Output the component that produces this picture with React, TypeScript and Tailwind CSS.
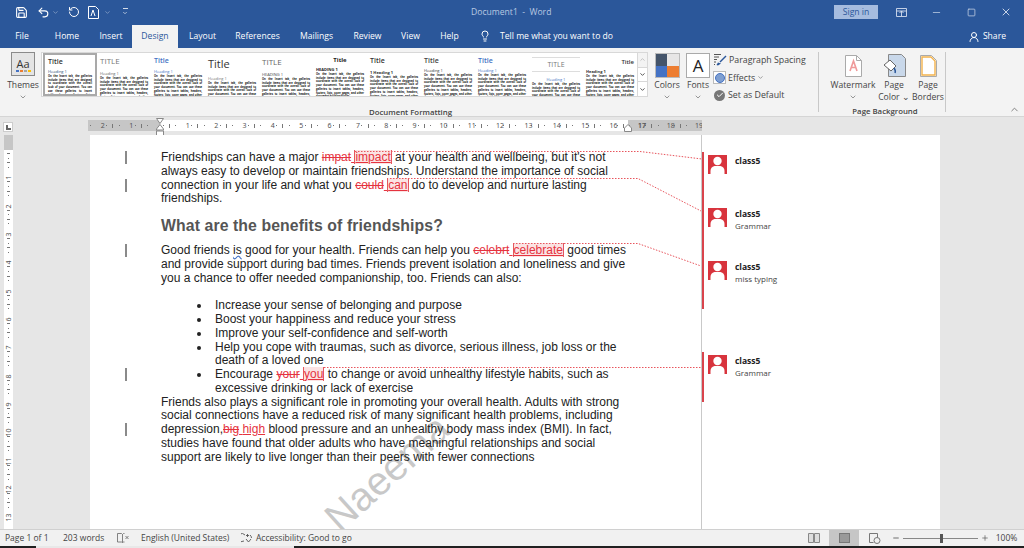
import { ChevronDown, ChevronUp, Lightbulb, Minus, Plus, RotateCw, Save, Square, Undo2, UserRound, X, Check } from "lucide-react";
import type { ReactNode } from "react";

const UI = "font-['Open_Sans',sans-serif]";
const BODY =
  "On the Insert tab, the galleries include items that are designed to coordinate with the overall look of your document. You can use these galleries to insert tables, headers, footers, lists, cover pages, and other document building blocks.";

const TABS = [
  { label: "File", w: "w-[44px]" },
  { label: "Home", w: "w-[46px]" },
  { label: "Insert", w: "w-[42px]" },
  { label: "Design", w: "w-[46px]", active: true },
  { label: "Layout", w: "w-[49px]" },
  { label: "References", w: "w-[61px]" },
  { label: "Mailings", w: "w-[57px]" },
  { label: "Review", w: "w-[45px]" },
  { label: "View", w: "w-[41px]" },
  { label: "Help", w: "w-[37px]" },
];

const STYLES = [
  { title: "Title", t: "text-[7px] font-semibold text-[#333]", head: "Heading 1", h: "text-[#1f4e79]", pt: "pt-[3px]", gap: "mt-[5px]", selected: true },
  { title: "TITLE", t: "text-[8px] text-[#777]", head: "Heading 1", h: "text-[#666]", pt: "pt-[4px]", gap: "mt-[7px]" },
  { title: "Title", t: "text-[7px] font-semibold text-[#4472c4]", head: "Heading 1", h: "text-[#4472c4]", pt: "pt-[4px]", gap: "mt-[6px]" },
  { title: "Title", t: "text-[11px] text-[#333]", head: "Heading 1", h: "text-[#777]", pt: "pt-[5px]", gap: "mt-[8px]" },
  { title: "TITLE", t: "text-[8px] text-[#666]", head: "HEADING 1", h: "text-[#444]", pt: "pt-[5px]", gap: "mt-[7px]" },
  { title: "Title", t: "text-[6px] font-bold text-[#222] text-center", head: "HEADING 1", h: "font-bold text-[#222]", pt: "pt-[4px]", gap: "mt-[5px]" },
  { title: "Title", t: "text-[7px] font-semibold text-[#333]", head: "1  Heading 1", h: "font-bold text-[#333]", pt: "pt-[4px]", gap: "mt-[7px]" },
  { title: "Title", t: "text-[7px] font-semibold text-[#444]", head: "Heading 1", h: "text-[#333]", pt: "pt-[4px]", gap: "mt-[5px]" },
  { title: "Title", t: "text-[7px] font-semibold text-[#4472c4]", head: "Heading 1", h: "text-[#4472c4]", pt: "pt-[4px]", gap: "mt-[5px]" },
  { title: "TITLE", t: "text-[7px] text-[#777] text-center border-y border-[#ddd] py-[3px]", head: "Heading 1", h: "text-[#4472c4] text-center", pt: "pt-[4px]", gap: "mt-[6px]" },
  { title: "Title", t: "text-[6px] font-semibold text-[#333] text-right", head: "Heading 1", h: "font-bold text-[#333]", pt: "pt-[6px]", gap: "mt-[5px]" },
];

function GalleryItem({ s }: { s: (typeof STYLES)[number] }) {
  return (
    <div className={`w-[54px] shrink-0 h-full px-[3px] overflow-hidden ${s.pt} ${s.selected ? "border-2 border-[#a9a9a9]" : ""}`}>
      <div className={`leading-none ${s.t}`}>{s.title}</div>
      <div className={`text-[4px] leading-none ${s.gap} ${s.h}`}>{s.head}</div>
      <div className="text-[2.600px] font-bold leading-[3.700px] mt-[1px] text-[#111] text-justify">{BODY}</div>
    </div>
  );
}

function BigButton({ label, label2, caret, icon, w }: { label: string; label2?: string; caret?: boolean; icon: ReactNode; w: string }) {
  return (
    <div className={`flex flex-col items-center ${w} shrink-0`}>
      <div className="h-[27px] flex items-center justify-center">{icon}</div>
      <div className="text-[8.600px] leading-[12px] text-[#444] whitespace-nowrap">{label}</div>
      {label2 && <div className="text-[8.600px] leading-[12px] text-[#444] whitespace-nowrap">{label2}</div>}
      {caret && <ChevronDown size={8} className="text-[#666] mt-[2px]" />}
    </div>
  );
}

function Ribbon() {
  return (
    <div className={`h-[69px] bg-[#f3f3f3] border-b border-[#d5d5d5] flex shrink-0 relative ${UI}`}>
      <div className="w-[41px] shrink-0 flex flex-col items-center pt-[4px] pl-[5px]">
        <div className="w-[24px] h-[24px] border border-[#8a8a8a] bg-[#e4e4e4] flex flex-col items-center justify-center relative">
          <span className="text-[11px] leading-[13px] text-[#333]">Aa</span>
          <div className="flex gap-[1px]">
            <span className="w-[3px] h-[2px] bg-[#4472c4]" />
            <span className="w-[3px] h-[2px] bg-[#ed7d31]" />
            <span className="w-[3px] h-[2px] bg-[#a5a5a5]" />
            <span className="w-[3px] h-[2px] bg-[#ffc000]" />
          </div>
        </div>
        <div className="text-[8.600px] leading-[12px] mt-[3px] text-[#444]">Themes</div>
        <ChevronDown size={8} className="text-[#666] mt-[2px]" />
      </div>

      <div className="w-[607px] shrink-0 flex flex-col">
        <div className="mt-[4px] h-[45px] border border-[#d8d8d8] bg-white flex pl-[1px]">
          {STYLES.map((s, i) => (
            <GalleryItem key={i} s={s} />
          ))}
          <div className="w-[10px] shrink-0 ml-auto flex flex-col border-l border-[#d8d8d8] bg-[#f3f3f3]">
            <div className="flex-1 flex items-center justify-center text-[#bbb]">
              <ChevronUp size={7} strokeWidth={3} />
            </div>
            <div className="flex-1 flex items-center justify-center border-y border-[#d8d8d8] bg-white text-[#444]">
              <ChevronDown size={7} strokeWidth={3} />
            </div>
            <div className="flex-1 flex items-center justify-center bg-white text-[#444]">
              <ChevronDown size={7} strokeWidth={3} />
            </div>
          </div>
        </div>
        <div className="text-[7.800px] font-semibold text-[#444] text-center mt-[9px] pl-[132px] leading-[12px]">Document Formatting</div>
      </div>

      <div className="flex pt-[4px] pl-[4px]">
        <BigButton
          w="w-[30px]"
          label="Colors"
          caret
          icon={
            <div className="w-[25px] h-[25px] grid grid-cols-2 grid-rows-2 border border-[#bbb]">
              <span className="bg-[#44546a]" />
              <span className="bg-[#e7e6e6]" />
              <span className="bg-[#4472c4]" />
              <span className="bg-[#ed7d31]" />
            </div>
          }
        />
        <div className="w-[1px]" />
        <BigButton
          w="w-[30px]"
          label="Fonts"
          caret
          icon={
            <div className="w-[24px] h-[25px] border border-[#aaa] bg-white flex items-center justify-center text-[17px] leading-none text-[#222]">A</div>
          }
        />
        <div className="w-[94px] flex flex-col text-[8.800px] text-[#444] leading-[12px] gap-[5px] pt-[1px]">
          <div className="flex items-center gap-[2px] whitespace-nowrap">
            <svg width="14" height="13" viewBox="0 0 14 13" className="shrink-0">
              <path d="M1 1.5h7M1 4h5M1 6.5h3M1 9h2M1 11.5h1" stroke="#555" strokeWidth="1" />
              <path d="M13 3 7 9" stroke="#2b579a" strokeWidth="1.5" />
              <path d="M5 9.5 8 10.5 5 12.5 3.5 12Z" fill="#2b579a" />
            </svg>
            Paragraph Spacing <ChevronDown size={7} className="text-[#666]" />
          </div>
          <div className="flex items-center gap-[2px] whitespace-nowrap">
            <div className="w-[13px] h-[13px] border border-[#bbb] bg-white flex items-center justify-center shrink-0">
              <span className="w-[10px] h-[10px] rounded-full bg-[#7f9fd1] border border-[#4472c4]" />
            </div>
            Effects <ChevronDown size={7} className="text-[#666]" />
          </div>
          <div className="flex items-center gap-[3px] whitespace-nowrap">
            <span className="w-[11px] h-[11px] ml-[1px] rounded-full bg-[#777] flex items-center justify-center shrink-0">
              <Check size={8} strokeWidth={3} className="text-white" />
            </span>
            Set as Default
          </div>
        </div>
      </div>

      <div className="w-px h-[60px] mt-[4px] bg-[#c8c8c8] ml-[11px]" />

      <div className="w-[126px] shrink-0 flex flex-col items-center relative">
        <div className="flex pt-[4px] h-[56px] pl-[10px]">
          <BigButton
            w="w-[48px]"
            label="Watermark"
            caret
            icon={
              <svg width="17" height="22" viewBox="0 0 17 22">
                <path d="M.5.5h11l5 5v16H.5Z" fill="#fff" stroke="#aaa" />
                <path d="M11.5.5v5h5" fill="none" stroke="#aaa" />
                <path d="M5 16 8.500 6 12 16M6.200 12.500h4.600" fill="none" stroke="#ef9a9a" strokeWidth="1.600" />
              </svg>
            }
          />
          <BigButton
            w="w-[34px]"
            label="Page"
            label2="Color ⌄"
            icon={
              <svg width="24" height="23" viewBox="0 0 24 23">
                <path d="M6.500.500h13l4 4v18h-17Z" fill="#c9d8ea" stroke="#888" />
                <path d="M2 11l6-5 6 6-5 5Z" fill="#fff" stroke="#666" />
                <path d="M12 14q2 3 1 5" stroke="#2b579a" strokeWidth="1.500" fill="none" />
              </svg>
            }
          />
          <BigButton
            w="w-[34px]"
            label="Page"
            label2="Borders"
            icon={
              <svg width="17" height="22" viewBox="0 0 17 22">
                <path d="M.5.5h11l5 5v16H.5Z" fill="#fff" stroke="#aaa" />
                <path d="M2 2h9l4 4v14H2Z" fill="none" stroke="#f2b24c" strokeWidth="1.400" />
              </svg>
            }
          />
        </div>
        <div className="text-[7.800px] font-semibold text-[#444] leading-[12px] mt-[2px] pl-[6px]">Page Background</div>
      </div>

      <div className="w-px h-[60px] mt-[4px] bg-[#c8c8c8]" />
      <ChevronUp size={11} className="absolute right-[4px] bottom-[1px] text-[#777]" />
    </div>
  );
}

function RulerCell({ n }: { n?: number }) {
  return (
    <div className="w-[28.35px] shrink-0 flex items-center justify-between pl-[3px] text-[7px] leading-none text-[#555]">
      <span className="w-[1px] h-[1px] bg-[#777]" />
      <span className="w-[1px] h-[4px] bg-[#777]" />
      <span className="w-[1px] h-[1px] bg-[#777]" />
      <span className="w-[7px] text-center translate-x-[3px]">{n}</span>
    </div>
  );
}

function HRuler() {
  return (
    <div className="h-[18px] bg-[#e6e6e6] flex shrink-0 relative">
      <div className="w-[88px] shrink-0 pl-[3px] pt-[5px]">
        <div className="w-[10px] h-[10px] bg-white border border-[#ccc] flex items-end justify-center pb-[1px]">
          <div className="w-[5px] h-[5px] border-l-2 border-b-2 border-[#666]" />
        </div>
      </div>
      <div className="mt-[3px] h-[11px] flex w-[614px] overflow-hidden bg-[#c6c6c6] relative">
        <div className="w-[72px] flex shrink-0 justify-end">
          <RulerCell n={2} />
          <RulerCell n={1} />
          <RulerCell />
        </div>
        <div className="flex w-[468px] shrink-0 bg-white">
          {Array.from({ length: 17 }, (_, i) => (
            <RulerCell key={i} n={i + 1} />
          ))}
        </div>
        <div className="flex flex-1 -ml-[14px]">
          <RulerCell n={17} />
          <RulerCell n={18} />
          <RulerCell n={19} />
        </div>
      </div>
      <div className="absolute left-[156px] top-[1px] w-[8px] flex flex-col items-center">
        <svg width="8" height="18" viewBox="0 0 8 18">
          <path d="M.5.5h7L4 5.500Z M4 6.500 7.500 11v1H.5v-1Z" fill="#fff" stroke="#888" />
          <rect x=".5" y="13" width="7" height="4.500" fill="#fff" stroke="#888" />
        </svg>
      </div>
      <svg width="8" height="8" viewBox="0 0 8 8" className="absolute left-[624px] top-[7px]">
        <path d="M4 .5 7.500 4v3.500H.5V4Z" fill="#fff" stroke="#888" />
      </svg>
    </div>
  );
}

function VRuler() {
  return (
    <div className="w-[90px] shrink-0 bg-[#e6e6e6] pl-[4px]">
      <div className="w-[9px] h-full bg-white overflow-hidden">
        <div className="h-[15px] bg-[#c6c6c6]" />
        {Array.from({ length: 13 }, (_, i) => (
          <div key={i} className="h-[28.35px] flex flex-col items-center justify-between text-[7px] leading-none text-[#555] pt-[3px]">
            <span className="w-[3px] h-px bg-[#777]" />
            <span className="w-[1px] h-[1px] bg-[#777]" />
            <span className="w-[3px] h-px bg-[#777]" />
            <span className="w-[1px] h-[1px] bg-[#777]" />
            <span className="-rotate-90 h-[7px] translate-y-[3px]">{i + 1}</span>
          </div>
        ))}
      </div>
    </div>
  );
}

function Del({ children }: { children: ReactNode }) {
  return <span className="text-[#e5333f] line-through">{children}</span>;
}

function Ins({ children, box }: { children: ReactNode; box?: boolean }) {
  return (
    <span className="text-[#e5333f] underline">
      {" "}
      <span className={box ? "bg-[#fbe3e3] border-x border-[#e5575f]" : ""}>{children}</span>
    </span>
  );
}

function Line({ children, bar }: { children: ReactNode; bar?: boolean }) {
  return (
    <div className="h-[13.75px] leading-[13.75px] whitespace-nowrap relative">
      {bar && <span className="absolute left-[-36px] top-0 w-[1.500px] h-[13px] bg-[#8a8a8a]" />}
      {children}
    </div>
  );
}

function Bullet({ children, bar, dot }: { children: ReactNode; bar?: boolean; dot?: boolean }) {
  return (
    <div className="pl-[54px] relative">
      {dot && <span className="absolute left-[36px] top-[5px] w-[4px] h-[4px] rounded-full bg-[#222]" />}
      <div className="relative">
        {bar && <span className="absolute left-[-90px] top-0 w-[1.500px] h-[13px] bg-[#8a8a8a]" />}
        <div className="h-[13.75px] leading-[13.75px] whitespace-nowrap">{children}</div>
      </div>
    </div>
  );
}

function Avatar() {
  return (
    <svg width="19" height="19" viewBox="0 0 19 19" className="shrink-0">
      <rect width="19" height="19" fill="#d8343d" />
      <circle cx="9.500" cy="6" r="4.200" fill="#fff" />
      <path d="M2.500 19v-3q0-4 4-5h6q4 1 4 5v3Z" fill="#fff" />
    </svg>
  );
}

function Comment({ sub, h }: { sub?: string; h: string }) {
  return (
    <div className={`border-l-2 border-[#d9444c] pl-[4px] pt-[3px] flex gap-[8px] ${h} ${UI}`}>
      <Avatar />
      <div>
        <div className="text-[8.500px] font-bold leading-[12px] text-[#222]">class5</div>
        {sub && <div className="text-[8px] leading-[11px] text-[#444]">{sub}</div>}
      </div>
    </div>
  );
}

function Page() {
  return (
    <div className="w-[850px] shrink-0 h-full bg-white flex relative overflow-hidden">
      <div className="absolute left-[254px] top-[363px] -rotate-[42deg] origin-bottom-left text-[40px] leading-none text-[#c8c8c8] font-['Liberation_Sans',sans-serif] whitespace-nowrap">
        Naeema
      </div>

      <div className="w-[611px] shrink-0 pl-[71px] pt-[16px] text-[12px] text-[#222] font-['Liberation_Sans',sans-serif] relative">
        <Line bar>
          Friendships can have a major <Del>impat</Del>
          <Ins box>impact</Ins> at your health and wellbeing, but it's not
        </Line>
        <Line>always easy to develop or maintain friendships. Understand the importance of social</Line>
        <Line bar>
          connection in your life and what you <Del>could</Del>
          <Ins box>can</Ins> do to develop and nurture lasting
        </Line>
        <Line>friendships.</Line>
        <div className="h-[38px] pt-[2px] flex items-center text-[15.800px] font-bold text-[#555] tracking-[0.1px]">What are the benefits of friendships?</div>
        <Line bar>
          Good friends <span className="underline decoration-wavy decoration-[#4472c4]">is</span> good for your health. Friends can help you <Del>celebrt</Del>
          <Ins box>celebrate</Ins> good times
        </Line>
        <Line>and provide support during bad times. Friends prevent isolation and loneliness and give</Line>
        <Line>you a chance to offer needed companionship, too. Friends can also:</Line>
        <div className="h-[14px]" />
        <Bullet dot>Increase your sense of belonging and purpose</Bullet>
        <Bullet dot>Boost your happiness and reduce your stress</Bullet>
        <Bullet dot>Improve your self-confidence and self-worth</Bullet>
        <Bullet dot>Help you cope with traumas, such as divorce, serious illness, job loss or the</Bullet>
        <Bullet>death of a loved one</Bullet>
        <Bullet dot bar>
          Encourage <Del>your</Del>
          <Ins box>you</Ins> to change or avoid unhealthy lifestyle habits, such as
        </Bullet>
        <Bullet>excessive drinking or lack of exercise</Bullet>
        <Line>Friends also plays a significant role in promoting your overall health. Adults with strong</Line>
        <Line>social connections have a reduced risk of many significant health problems, including</Line>
        <Line bar>
          depression,<Del>big</Del>
          <Ins>high</Ins> blood pressure and an unhealthy body mass index (BMI). In fact,
        </Line>
        <Line>studies have found that older adults who have meaningful relationships and social</Line>
        <Line>support are likely to live longer than their peers with fewer connections</Line>
      </div>

      <div className="w-px bg-[#c9c9c9] shrink-0" />

      <div className="flex-1 pt-[17px] flex flex-col">
        <Comment h="h-[53px]" />
        <Comment h="h-[53px]" sub="Grammar" />
        <Comment h="h-[51px]" sub="miss typing" />
        <Comment h="h-[50px] mt-[43px]" sub="Grammar" />
      </div>

      <svg className="absolute inset-0 pointer-events-none" width="850" height="394" fill="none" stroke="#e8555d" strokeWidth="1" strokeDasharray="1.500 1.500">
        <path d="M265 16.500H550L612 24" />
        <path d="M300 43.500H548L611 76" />
        <path d="M423 108.500H548L611 131" />
        <path d="M234 232.500H611" />
      </svg>
    </div>
  );
}

function StatusBar() {
  return (
    <div className={`h-[19px] shrink-0 flex flex-col ${UI}`}>
      <div className="h-[17px] bg-[#f1f1f1] border-t border-[#d0d0d0] flex items-center text-[8.500px] text-[#444] pl-[5px]">
        <span className="w-[58px]">Page 1 of 1</span>
        <span className="w-[54px]">203 words</span>
        <svg width="12" height="10" viewBox="0 0 12 10" className="shrink-0">
          <path d="M.5.500h4l1 1v8l-1-.5h-4ZM5.500 1.500l1-1h1M5.500 9.500l1-.5h1" fill="none" stroke="#666" strokeWidth=".8" />
          <path d="M8.500 3l3 3M11.500 3l-3 3" stroke="#666" strokeWidth=".8" />
        </svg>
        <span className="ml-[12px] w-[100px]">English (United States)</span>
        <svg width="13" height="11" viewBox="0 0 13 11" className="shrink-0" fill="none" stroke="#555" strokeWidth=".9">
          <path d="M4 2A4 4 0 1 0 3 8M9 2a4 4 0 0 1 1.500 3" />
          <path d="M6.500 1v3M5 2.500h3M5 6l2.500 3L10 6" />
        </svg>
        <span className="ml-[2px]">Accessibility: Good to go</span>
        <div className="ml-auto flex items-center h-full">
          <svg width="12" height="10" viewBox="0 0 12 10" className="shrink-0">
            <path d="M.5.500h5v9h-5ZM6.500.500h5v9h-5Z" fill="#ddd" stroke="#888" />
          </svg>
          <div className="w-[30px] h-full bg-[#c6c6c6] ml-[9px] flex items-center justify-center">
            <div className="w-[11px] h-[10px] bg-[#999] border border-[#777]" />
          </div>
          <svg width="12" height="11" viewBox="0 0 12 11" className="ml-[10px] shrink-0" fill="none" stroke="#777">
            <path d="M.5.500h8v4M.5.500v9h4" />
            <circle cx="8" cy="7.500" r="3" />
          </svg>
          <Minus size={8} strokeWidth={2.500} className="ml-[11px] text-[#555]" />
          <div className="w-[75px] ml-[3px] h-[1px] bg-[#888] relative">
            <span className="absolute left-[37px] top-[-4px] w-[3px] h-[9px] bg-[#555]" />
          </div>
          <Plus size={8} strokeWidth={2} className="ml-[3px] text-[#555]" />
          <span className="w-[35px] text-center text-[8.500px]">100%</span>
        </div>
      </div>
      <div className="h-[2px] bg-[#202020] flex">
        <div className="w-[36px]" />
        <div className="w-[258px] bg-[#e8e8e8]" />
      </div>
    </div>
  );
}

export default function App() {
  return (
    <div className="w-[1024px] h-[548px] overflow-hidden flex flex-col bg-[#e6e6e6]">
      <div className={`h-[48px] bg-[#2b579a] text-white shrink-0 ${UI}`}>
        <div className="h-[24px] flex items-center relative pl-[15px]">
          <Save size={13} />
          <Undo2 size={13} className="ml-[9px]" />
          <ChevronDown size={7} className="ml-[2px] opacity-60" />
          <RotateCw size={12} className="ml-[9px] -scale-x-100" />
          <svg width="11" height="13" viewBox="0 0 11 13" className="ml-[8px]" fill="none" stroke="#fff">
            <path d="M.5.500h7l3 3v9H.5Z" />
            <path d="M3 10l2-6 2 6" />
          </svg>
          <ChevronDown size={7} className="ml-[5px] opacity-60" />
          <div className="ml-[11px] flex flex-col items-center gap-[1px] opacity-80">
            <span className="w-[5px] h-px bg-white" />
            <ChevronDown size={6} strokeWidth={3} />
          </div>
          <div className="absolute left-[471px] top-[6px] text-[8.600px] leading-[13px] text-[#b9c9e2]">Document1&nbsp; -&nbsp; Word</div>
          <div className="ml-auto flex items-center pr-[12px] gap-[0]">
            <div className="w-[44px] h-[14px] bg-[#a6bcdf] text-[#2b579a] text-[8.600px] leading-[14px] text-center">Sign in</div>
            <svg width="11" height="9" viewBox="0 0 11 9" className="ml-[18px]" fill="none" stroke="#d5deee">
              <path d="M.5.500h10v8H.5ZM.5 3h10M5.500 3v5M3.500 5l2-2 2 2" strokeWidth=".9" />
            </svg>
            <Minus size={11} className="ml-[24px] text-[#a9bcd9]" />
            <Square size={9} className="ml-[25px] text-[#c7d3e6]" />
            <X size={12} className="ml-[24px] text-[#c7d3e6]" />
          </div>
        </div>
        <div className="h-[24px] flex items-end text-[8.600px]">
          {TABS.map((t) => (
            <div
              key={t.label}
              className={`${t.w} h-[23px] leading-[23px] text-center shrink-0 ${t.active ? "bg-[#f3f3f3] text-[#2b579a]" : "text-white"}`}
            >
              {t.label}
            </div>
          ))}
          <Lightbulb size={12} className="ml-[11px] mb-[6px] shrink-0" />
          <span className="ml-[9px] h-[23px] leading-[23px] whitespace-nowrap">Tell me what you want to do</span>
          <div className="ml-auto pr-[18px] h-[23px] flex items-center gap-[3px]">
            <UserRound size={12} />
            Share
          </div>
        </div>
      </div>

      <Ribbon />
      <HRuler />

      <div className="flex-1 min-h-0 flex">
        <VRuler />
        <Page />
      </div>

      <StatusBar />
    </div>
  );
}
